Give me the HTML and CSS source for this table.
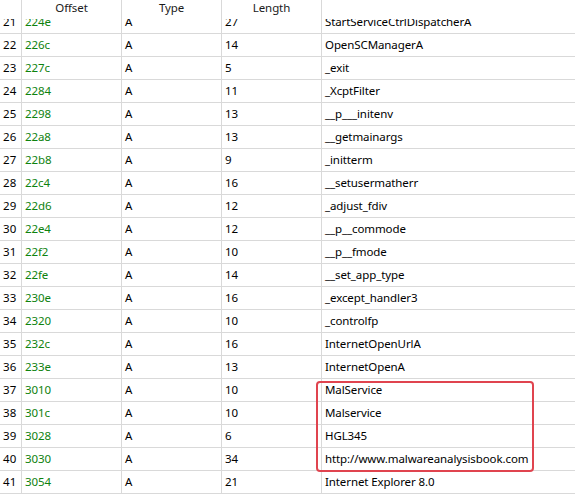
FILE: index.html
```html
<!DOCTYPE html>
<html>
<head>
<meta charset="utf-8">
<link rel="stylesheet" href="styles.css">
</head>
<body>
<div class="view">
  <div class="rows">
    <div class="row"><div class="c n">21</div><div class="c off">224e</div><div class="c">A</div><div class="c">27</div><div class="c s">StartServiceCtrlDispatcherA</div></div>
    <div class="row"><div class="c n">22</div><div class="c off">226c</div><div class="c">A</div><div class="c">14</div><div class="c s">OpenSCManagerA</div></div>
    <div class="row"><div class="c n">23</div><div class="c off">227c</div><div class="c">A</div><div class="c">5</div><div class="c s">_exit</div></div>
    <div class="row"><div class="c n">24</div><div class="c off">2284</div><div class="c">A</div><div class="c">11</div><div class="c s">_XcptFilter</div></div>
    <div class="row"><div class="c n">25</div><div class="c off">2298</div><div class="c">A</div><div class="c">13</div><div class="c s">__p___initenv</div></div>
    <div class="row"><div class="c n">26</div><div class="c off">22a8</div><div class="c">A</div><div class="c">13</div><div class="c s">__getmainargs</div></div>
    <div class="row"><div class="c n">27</div><div class="c off">22b8</div><div class="c">A</div><div class="c">9</div><div class="c s">_initterm</div></div>
    <div class="row"><div class="c n">28</div><div class="c off">22c4</div><div class="c">A</div><div class="c">16</div><div class="c s">__setusermatherr</div></div>
    <div class="row"><div class="c n">29</div><div class="c off">22d6</div><div class="c">A</div><div class="c">12</div><div class="c s">_adjust_fdiv</div></div>
    <div class="row"><div class="c n">30</div><div class="c off">22e4</div><div class="c">A</div><div class="c">12</div><div class="c s">__p__commode</div></div>
    <div class="row"><div class="c n">31</div><div class="c off">22f2</div><div class="c">A</div><div class="c">10</div><div class="c s">__p__fmode</div></div>
    <div class="row"><div class="c n">32</div><div class="c off">22fe</div><div class="c">A</div><div class="c">14</div><div class="c s">__set_app_type</div></div>
    <div class="row"><div class="c n">33</div><div class="c off">230e</div><div class="c">A</div><div class="c">16</div><div class="c s">_except_handler3</div></div>
    <div class="row"><div class="c n">34</div><div class="c off">2320</div><div class="c">A</div><div class="c">10</div><div class="c s">_controlfp</div></div>
    <div class="row"><div class="c n">35</div><div class="c off">232c</div><div class="c">A</div><div class="c">16</div><div class="c s">InternetOpenUrlA</div></div>
    <div class="row"><div class="c n">36</div><div class="c off">233e</div><div class="c">A</div><div class="c">13</div><div class="c s">InternetOpenA</div></div>
    <div class="row"><div class="c n">37</div><div class="c off">3010</div><div class="c">A</div><div class="c">10</div><div class="c s">MalService</div></div>
    <div class="row"><div class="c n">38</div><div class="c off">301c</div><div class="c">A</div><div class="c">10</div><div class="c s">Malservice</div></div>
    <div class="row"><div class="c n">39</div><div class="c off">3028</div><div class="c">A</div><div class="c">6</div><div class="c s">HGL345</div></div>
    <div class="row"><div class="c n">40</div><div class="c off">3030</div><div class="c">A</div><div class="c">34</div><div class="c s">http://www.malwareanalysisbook.com</div></div>
    <div class="row"><div class="c n">41</div><div class="c off">3054</div><div class="c">A</div><div class="c">21</div><div class="c s">Internet Explorer 8.0</div></div>
  </div>
  <div class="header">
    <div class="h"></div><div class="h">Offset</div><div class="h">Type</div><div class="h">Length</div><div class="h last"></div>
  </div>
  <div class="highlight"></div>
</div>
</body>
</html>
```

FILE: styles.css
```css
html, body {
  margin: 0;
  padding: 0;
  background: #fff;
}
.view {
  position: relative;
  width: 575px;
  height: 494px;
  overflow: hidden;
  font-family: "Noto Sans", "Open Sans", sans-serif;
  font-size: 11.5px;
  letter-spacing: -0.1px;
  color: #000;
}
.rows {
  padding-top: 11px;
}
.row {
  display: grid;
  grid-template-columns: 22px 100px 100px 100px 1fr;
  height: 23px;
  border-bottom: 1px solid #d9d9d9;
  box-sizing: border-box;
}
.c {
  border-right: 1px solid #d9d9d9;
  line-height: 22px;
  padding-left: 3px;
  white-space: nowrap;
  overflow: hidden;
}
.c.s {
  border-right: none;
}
.c.n {
  padding-left: 3px;
  letter-spacing: 0.2px;
}
.c.off {
  color: #0e820e;
}
.header {
  position: absolute;
  top: 0;
  left: 0;
  right: 0;
  height: 19px;
  background: #fff;
  display: grid;
  grid-template-columns: 22px 100px 100px 100px 1fr;
}
.h {
  border-right: 1px solid #d9d9d9;
  text-align: center;
  line-height: 16px;
  color: #1a1a1a;
}
.h.last {
  border-right: none;
}
.highlight {
  position: absolute;
  left: 316px;
  top: 381px;
  width: 218px;
  height: 91px;
  box-sizing: border-box;
  border: 2px solid #e0444f;
  border-radius: 4px;
}
```
